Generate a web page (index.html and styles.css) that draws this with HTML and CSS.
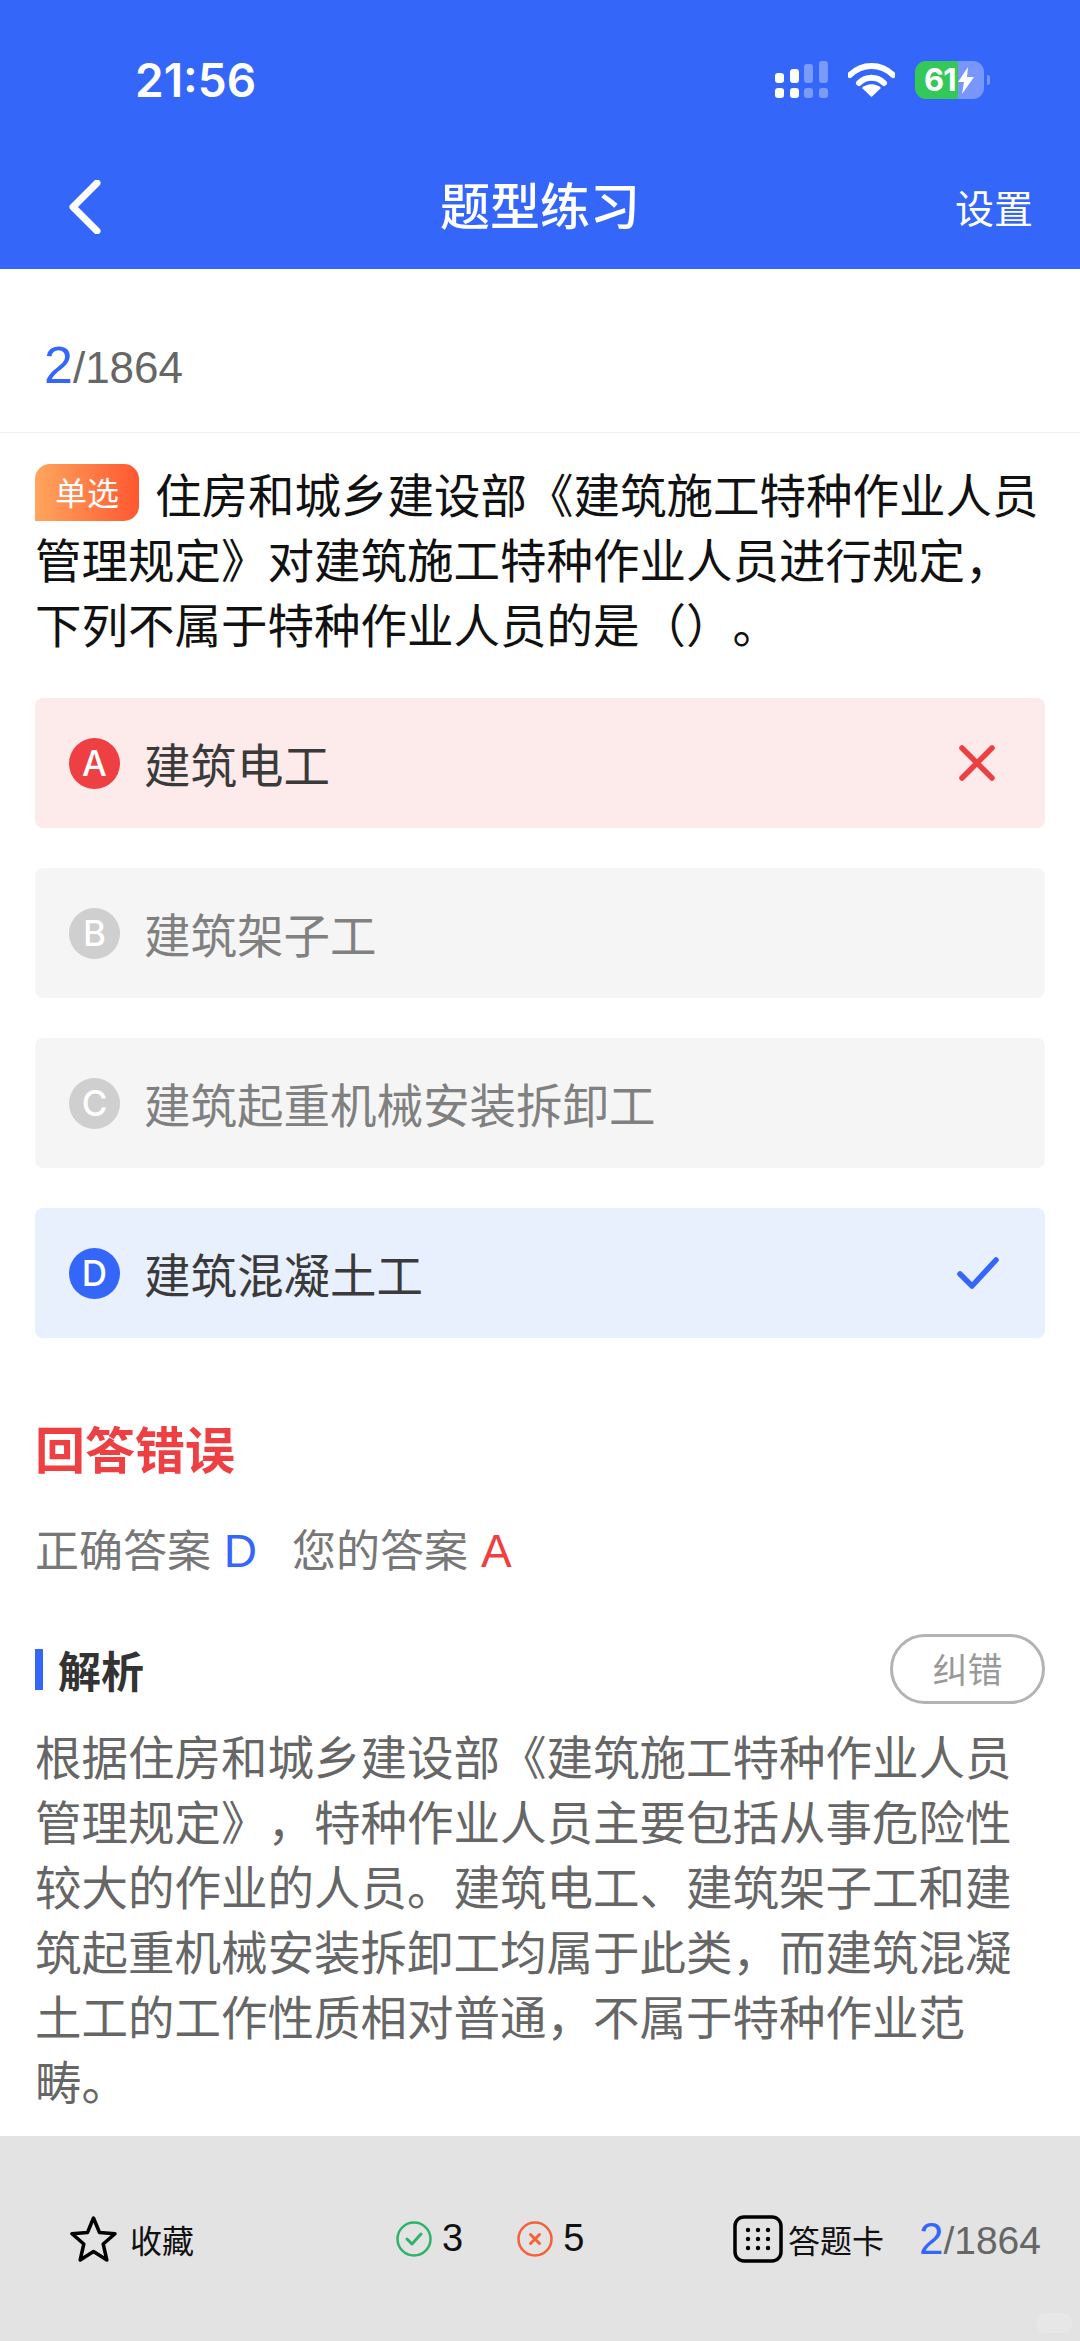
FILE: index.html
```html
<!DOCTYPE html>
<html lang="zh-CN">
<head>
	<meta charset="UTF-8" />
	<meta name="viewport" content="width=device-width, initial-scale=1.0" />
	<title>题型练习</title>
	<link rel="stylesheet" href="styles.css">
</head>
<body>
	<header class="header">
		<div class="status-bar">
			<div class="status-time">21:56</div>
			<div class="status-icons">
				<svg class="icon-signal" width="53" height="38" viewBox="0 0 53 38">
					<rect x="0" y="12" width="9" height="10" rx="3" fill="#fff"/>
					<rect x="15" y="8" width="9" height="14" rx="3" fill="#fff"/>
					<rect x="29" y="3" width="9" height="19" rx="3" fill="#fff" opacity=".35"/>
					<rect x="44" y="0" width="9" height="22" rx="3" fill="#fff" opacity=".35"/>
					<rect x="0" y="27" width="9" height="10" rx="3" fill="#fff"/>
					<rect x="15" y="27" width="9" height="10" rx="3" fill="#fff"/>
					<rect x="29" y="27" width="9" height="10" rx="3" fill="#fff" opacity=".35"/>
					<rect x="44" y="27" width="9" height="10" rx="3" fill="#fff" opacity=".35"/>
				</svg>
				<svg class="icon-wifi" width="47" height="34" viewBox="0 0 47 34">
					<path d="M2 12 C14 0 33 0 45 12" fill="none" stroke="#fff" stroke-width="6" stroke-linecap="round"/>
					<path d="M11 20 C18 13 29 13 36 20" fill="none" stroke="#fff" stroke-width="6" stroke-linecap="round"/>
					<path d="M23.500 34 L14 25 C19 20 28 20 33 25 Z" fill="#fff"/>
				</svg>
				<div class="battery">
					<span class="battery-num">61</span>
					<svg width="16" height="27" viewBox="0 0 16 27"><path d="M10 0 L0 15 H6 L4 27 L16 10 H9 Z" fill="#fff"/></svg>
				</div>
				<div class="battery-nub"></div>
			</div>
		</div>
		<nav class="nav">
			<svg class="nav-back" width="33" height="54" viewBox="0 0 33 54">
				<path d="M29 3 L5 27 L29 51" fill="none" stroke="#fff" stroke-width="7" stroke-linecap="round" stroke-linejoin="round"/>
			</svg>
			<div class="nav-title">题型练习</div>
			<div class="nav-action">设置</div>
		</nav>
	</header>

	<main class="content">
		<div class="progress">
			<span class="progress-cur">2</span><span class="progress-total">/1864</span>
		</div>

		<section class="question">
			<p class="question-text"><span class="badge">单选</span>住房和城乡建设部《建筑施工特种作业人员管理规定》对建筑施工特种作业人员进行规定，下列不属于特种作业人员的是（）。</p>
			<div class="options">
				<div class="option option-wrong">
					<span class="option-mark">A</span>
					<span class="option-text">建筑电工</span>
					<svg class="option-icon" width="36" height="36" viewBox="0 0 36 36">
						<path d="M3 3 L33 33 M33 3 L3 33" fill="none" stroke="#ee3f43" stroke-width="5.500" stroke-linecap="round"/>
					</svg>
				</div>
				<div class="option">
					<span class="option-mark">B</span>
					<span class="option-text">建筑架子工</span>
				</div>
				<div class="option">
					<span class="option-mark">C</span>
					<span class="option-text">建筑起重机械安装拆卸工</span>
				</div>
				<div class="option option-right">
					<span class="option-mark">D</span>
					<span class="option-text">建筑混凝土工</span>
					<svg class="option-icon option-check" width="42" height="32" viewBox="0 0 42 32">
						<path d="M3 17 L15 29 L39 3" fill="none" stroke="#3366f9" stroke-width="5.500" stroke-linecap="round" stroke-linejoin="round"/>
					</svg>
				</div>
			</div>
		</section>

		<section class="result">
			<h2 class="result-title">回答错误</h2>
			<div class="result-answers">
				<span>正确答案 <em class="answer-right">D</em></span>
				<span>您的答案 <em class="answer-wrong">A</em></span>
			</div>
		</section>

		<section class="analysis">
			<div class="analysis-head">
				<h3 class="analysis-title">解析</h3>
				<div class="report-btn">纠错</div>
			</div>
			<p class="analysis-text">根据住房和城乡建设部《建筑施工特种作业人员管理规定》，特种作业人员主要包括从事危险性较大的作业的人员。建筑电工、建筑架子工和建筑起重机械安装拆卸工均属于此类，而建筑混凝土工的工作性质相对普通，不属于特种作业范畴。</p>
		</section>
	</main>

	<footer class="footer">
		<div class="footer-item">
			<svg width="47" height="48" viewBox="0 0 47 48">
				<path d="M23.500 3 L29.500 17.500 L45 18.700 L33.200 29 L36.800 45 L23.500 36.500 L10.200 45 L13.800 29 L2 18.700 L17.500 17.500 Z" fill="none" stroke="#000" stroke-width="3.500" stroke-linejoin="round"/>
			</svg>
			<span>收藏</span>
		</div>
		<div class="footer-stats">
			<div class="stat">
				<svg width="36" height="36" viewBox="0 0 36 36">
					<circle cx="18" cy="18" r="16.500" fill="none" stroke="#2fb36b" stroke-width="2.500"/>
					<path d="M11 18 L16 23 L25 13" fill="none" stroke="#2fb36b" stroke-width="3" stroke-linecap="round" stroke-linejoin="round"/>
				</svg>
				<span>3</span>
			</div>
			<div class="stat">
				<svg width="36" height="36" viewBox="0 0 36 36">
					<circle cx="18" cy="18" r="16.500" fill="none" stroke="#f4623a" stroke-width="2.500"/>
					<path d="M13.500 13.500 L22.500 22.500 M22.500 13.500 L13.500 22.500" fill="none" stroke="#f4623a" stroke-width="3" stroke-linecap="round"/>
				</svg>
				<span>5</span>
			</div>
		</div>
		<div class="footer-card">
			<svg width="50" height="48" viewBox="0 0 50 48">
				<rect x="2" y="2" width="46" height="44" rx="9" fill="none" stroke="#000" stroke-width="3.500"/>
				<g fill="#000">
					<circle cx="15" cy="15" r="2.200"/><circle cx="25" cy="15" r="2.200"/><circle cx="35" cy="15" r="2.200"/>
					<circle cx="15" cy="24" r="2.200"/><circle cx="25" cy="24" r="2.200"/><circle cx="35" cy="24" r="2.200"/>
					<circle cx="15" cy="33" r="2.200"/><circle cx="25" cy="33" r="2.200"/><circle cx="35" cy="33" r="2.200"/>
				</g>
			</svg>
			<span class="card-label">答题卡</span>
			<div class="footer-progress">
				<span class="footer-cur">2</span><span class="footer-total">/1864</span>
			</div>
		</div>
		<div class="home-dot"></div>
	</footer>
</body>
</html>
```

FILE: styles.css
```css
* {
	margin: 0;
	padding: 0;
	box-sizing: border-box;
}

body {
	font-family: "Noto Sans CJK SC", "Noto Sans", sans-serif;
	background-color: #fff;
	width: 1080px;
	height: 2341px;
	overflow: hidden;
	display: flex;
	flex-direction: column;
	color: #111;
	text-spacing-trim: space-all;
}

/* top blue area */
.header {
	height: 269px;
	background-color: #3366f9;
	padding-top: 40px;
	color: #fff;
}

.status-bar {
	height: 80px;
	padding: 0 90px 0 135px;
	display: flex;
	justify-content: space-between;
	align-items: center;
}

.status-time {
	font-family: "Inter", sans-serif;
	font-size: 46px;
	font-weight: 600;
}

.status-icons {
	display: flex;
	align-items: center;
}

.icon-signal {
	margin-right: 20px;
}

.icon-wifi {
	margin-right: 20px;
}

.battery {
	width: 69px;
	height: 38px;
	border-radius: 11px;
	background: linear-gradient(90deg, #34c759 0, #34c759 43px, #7896fb 43px);
	display: flex;
	align-items: center;
	padding-left: 9px;
	gap: 2px;
}

.battery-num {
	font-family: "Inter", sans-serif;
	font-size: 31px;
	font-weight: 700;
	line-height: 38px;
	letter-spacing: -1px;
}

.battery-nub {
	width: 3px;
	height: 10px;
	margin-left: 3px;
	background-color: #7896fb;
	border-radius: 0 3px 3px 0;
}

.nav {
	margin-top: 32px;
	height: 110px;
	padding: 0 47px;
	display: grid;
	grid-template-columns: 1fr auto 1fr;
	align-items: center;
}

.nav-back {
	margin-left: 21px;
}

.nav-title {
	font-size: 50px;
	font-weight: 500;
	line-height: 60px;
	margin-bottom: 8px;
}

.nav-action {
	font-size: 39px;
	line-height: 50px;
	justify-self: end;
	margin-bottom: 2px;
}

.content {
	flex: 1;
}

.progress {
	height: 164px;
	padding: 66px 0 0 44px;
	border-bottom: 1px solid #f2f2f2;
	font-family: "Liberation Sans", sans-serif;
	line-height: 60px;
}

.progress-cur {
	font-size: 52px;
	color: #3366f9;
}

.progress-total {
	font-size: 44px;
	color: #666;
}

.question {
	padding: 27px 35px 0;
}

.question-text {
	font-size: 46.500px;
	line-height: 65px;
	color: #111;
}

.badge {
	display: inline-block;
	width: 104px;
	height: 57px;
	margin: -10px 16px -10px 0;
	border-radius: 15px 15px 15px 0;
	background: linear-gradient(90deg, #ffa65e, #ff5730);
	color: #fff;
	font-size: 32px;
	line-height: 54px;
	text-align: center;
	vertical-align: 8px;
}

.options {
	margin-top: 43px;
	display: flex;
	flex-direction: column;
	gap: 40px;
}

.option {
	height: 130px;
	padding: 0 50px 0 34px;
	border-radius: 8px;
	background-color: #f5f5f5;
	display: flex;
	align-items: center;
	color: #808080;
}

.option-mark {
	width: 51px;
	height: 51px;
	border-radius: 50%;
	margin-right: 24px;
	background-color: #cfcfcf;
	color: #fff;
	font-family: "Inter", sans-serif;
	font-size: 35px;
	font-weight: 500;
	line-height: 51px;
	text-align: center;
}

.option-text {
	flex: 1;
	font-size: 46.500px;
	line-height: 60px;
}

.option-check {
	margin-right: -4px;
}

.option-wrong {
	background-color: #fdeaea;
	color: #3a3a3a;
}

.option-wrong .option-mark {
	background-color: #ee3f43;
}

.option-right {
	background-color: #e9f0fd;
	color: #3a3a3a;
}

.option-right .option-mark {
	background-color: #3366f9;
}

.result {
	padding: 0 35px;
	margin-top: 74px;
}

.result-title {
	font-size: 50px;
	font-weight: 700;
	line-height: 70px;
	color: #ee3f43;
}

.result-answers {
	margin-top: 36px;
	display: flex;
	gap: 35px;
	font-size: 44px;
	line-height: 60px;
	color: #777;
}

.result-answers em {
	margin-left: 3px;
	font-family: "Liberation Sans", sans-serif;
	font-style: normal;
	font-size: 46px;
}

.answer-right {
	color: #3366f9;
}

.answer-wrong {
	color: #ee3f43;
}

.analysis {
	padding: 0 35px;
	margin-top: 53px;
}

.analysis-head {
	height: 70px;
	display: flex;
	justify-content: space-between;
	align-items: center;
}

.analysis-title {
	border-left: 8px solid #3366f9;
	padding-left: 15px;
	font-size: 43px;
	font-weight: 700;
	line-height: 41px;
	color: #333;
}

.report-btn {
	width: 155px;
	height: 70px;
	border: 3px solid #b3b3b3;
	border-radius: 35px;
	color: #999;
	font-size: 35px;
	line-height: 62px;
	text-align: center;
}

.analysis-text {
	margin-top: 18px;
	font-size: 46.500px;
	line-height: 65px;
	color: #666;
}

/* bottom bar */
.footer {
	position: relative;
	height: 205px;
	padding: 0 39px 0 70px;
	background-color: #e3e3e3;
	display: flex;
	align-items: center;
	font-size: 32px;
	color: #111;
}

.footer-item {
	display: flex;
	align-items: center;
	gap: 13px;
}

.footer-stats {
	margin-left: 202px;
	display: flex;
	gap: 54px;
	font-family: "Liberation Sans", sans-serif;
	font-size: 38px;
}

.stat {
	display: flex;
	align-items: center;
	gap: 10px;
}

.footer-card {
	margin-left: auto;
	display: flex;
	align-items: center;
}

.card-label {
	margin-left: 5px;
}

.footer-progress {
	margin-left: 35px;
	font-family: "Liberation Sans", sans-serif;
}

.footer-cur {
	font-size: 44px;
	color: #3366f9;
}

.footer-total {
	font-size: 39px;
	color: #666;
}

.home-dot {
	position: absolute;
	right: 8px;
	bottom: 8px;
	width: 35px;
	height: 20px;
	border-radius: 8px;
	background-color: #e7e7e7;
}
```
